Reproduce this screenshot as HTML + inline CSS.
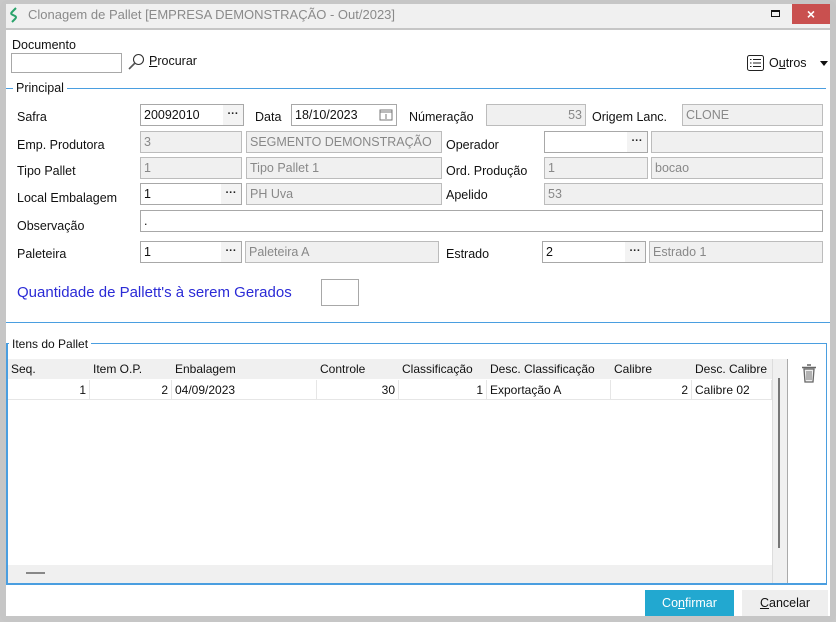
<!DOCTYPE html>
<html><head><meta charset="utf-8"><style>
*{box-sizing:border-box;margin:0;padding:0}
body{width:836px;height:622px;background:#c8c8c8;font-family:"Liberation Sans",sans-serif;font-size:12px;color:#111;position:relative;overflow:hidden}
.a{position:absolute}
.win{left:0;top:0;width:836px;height:622px;border-radius:8px;background:#c6c6c6}
.title{left:6px;top:4px;width:824px;height:24px;background:#f0f0f0}
.content{left:6px;top:30px;width:824px;height:586px;background:#fff}
.lbl{position:absolute;font-size:12.5px;color:#111;white-space:nowrap}
.in{position:absolute;height:22px;border:1px solid #a8a8a8;background:#fff;font-size:12.5px;padding:0 3px;line-height:20px;white-space:nowrap;overflow:hidden}
.g{background:#f0f0f0;color:#888;border-color:#bcbcbc}
.dots{position:absolute;right:0;top:0;width:20px;height:20px;background:#f3f3f3;text-align:center;font-weight:bold;font-size:11px;line-height:19px;color:#222}
.line{position:absolute;height:1px;background:#4a9ee0}
.th,.td{position:absolute;font-size:12px;white-space:nowrap;overflow:hidden;padding:0 3px;height:20px;line-height:20px}
.td{border-right:1px solid #e6e6e6;border-bottom:1px solid #e6e6e6}
</style></head><body>
<div class="a win"></div>
<div class="a title"></div>
<svg class="a" style="left:9px;top:7px" width="10" height="16" viewBox="0 0 10 16"><path d="M7 1 L3 5 Q1 7 4 8 L6 9 Q8 10 6 12 L3 15" stroke="#2aa36b" stroke-width="2" fill="none"/></svg>
<div class="a" style="left:28px;top:7px;font-size:13px;color:#8a8a8a">Clonagem de Pallet [EMPRESA DEMONSTRAÇÃO - Out/2023]</div>
<div class="a" style="left:771px;top:10px;width:9px;height:7px;border:1px solid #111;border-top-width:2px"></div>
<div class="a" style="left:792px;top:4px;width:38px;height:20px;background:#c9504f;color:#fff;text-align:center;font-size:14px;line-height:20px;font-weight:bold">×</div>
<div class="a content"></div>

<div class="lbl" style="left:12px;top:38px">Documento</div>
<div class="in" style="left:11px;top:53px;width:111px;height:20px"></div>
<svg class="a" style="left:127px;top:53px" width="18" height="18" viewBox="0 0 18 18"><circle cx="11.5" cy="6.5" r="5" stroke="#333" stroke-width="1.1" fill="none"/><path d="M8 10 L2 16" stroke="#555" stroke-width="1.6"/></svg>
<div class="lbl" style="left:149px;top:54px"><u>P</u>rocurar</div>
<svg class="a" style="left:746px;top:54px" width="19" height="18" viewBox="0 0 19 18"><rect x="1.5" y="1.5" width="16" height="15" rx="2" stroke="#222" fill="none"/><path d="M4 5.5h1.5M4 9h1.5M4 12.5h1.5M7 5.5h8M7 9h8M7 12.5h8" stroke="#222"/></svg>
<div class="lbl" style="left:769px;top:56px">O<u>u</u>tros</div>
<div class="a" style="left:820px;top:61px;border-left:4px solid transparent;border-right:4px solid transparent;border-top:5px solid #111"></div>

<div class="line" style="left:6px;top:88px;width:820px"></div>
<div class="lbl" style="left:13px;top:81px;background:#fff;padding:0 3px">Principal</div>

<div class="lbl" style="left:17px;top:110px">Safra</div>
<div class="in" style="left:140px;top:104px;width:104px">20092010<span class="dots">···</span></div>
<div class="lbl" style="left:255px;top:110px">Data</div>
<div class="in" style="left:291px;top:104px;width:106px">18/10/2023<svg style="position:absolute;right:3px;top:3px" width="14" height="13" viewBox="0 0 14 13"><rect x="1" y="2" width="12" height="10" stroke="#777" fill="none"/><path d="M1 4h12M7 6v5" stroke="#777"/></svg></div>
<div class="lbl" style="left:409px;top:110px">Númeração</div>
<div class="in g" style="left:486px;top:104px;width:100px;text-align:right">53</div>
<div class="lbl" style="left:592px;top:110px">Origem Lanc.</div>
<div class="in g" style="left:682px;top:104px;width:141px">CLONE</div>

<div class="lbl" style="left:17px;top:138px">Emp. Produtora</div>
<div class="in g" style="left:140px;top:131px;width:102px">3</div>
<div class="in g" style="left:246px;top:131px;width:196px">SEGMENTO DEMONSTRAÇÃO</div>
<div class="lbl" style="left:446px;top:138px">Operador</div>
<div class="in" style="left:544px;top:131px;width:104px"><span class="dots">···</span></div>
<div class="in g" style="left:651px;top:131px;width:172px"></div>

<div class="lbl" style="left:17px;top:164px">Tipo Pallet</div>
<div class="in g" style="left:140px;top:157px;width:102px">1</div>
<div class="in g" style="left:246px;top:157px;width:196px">Tipo Pallet 1</div>
<div class="lbl" style="left:446px;top:164px">Ord. Produção</div>
<div class="in g" style="left:544px;top:157px;width:104px">1</div>
<div class="in g" style="left:651px;top:157px;width:172px">bocao</div>

<div class="lbl" style="left:17px;top:191px">Local Embalagem</div>
<div class="in" style="left:140px;top:183px;width:102px">1<span class="dots">···</span></div>
<div class="in g" style="left:246px;top:183px;width:196px">PH Uva</div>
<div class="lbl" style="left:446px;top:188px">Apelido</div>
<div class="in g" style="left:544px;top:183px;width:279px">53</div>

<div class="lbl" style="left:17px;top:219px">Observação</div>
<div class="in" style="left:140px;top:210px;width:683px">.</div>

<div class="lbl" style="left:17px;top:247px">Paleteira</div>
<div class="in" style="left:140px;top:241px;width:102px">1<span class="dots">···</span></div>
<div class="in g" style="left:245px;top:241px;width:194px">Paleteira A</div>
<div class="lbl" style="left:446px;top:247px">Estrado</div>
<div class="in" style="left:542px;top:241px;width:104px">2<span class="dots">···</span></div>
<div class="in g" style="left:649px;top:241px;width:174px">Estrado 1</div>

<div class="lbl" style="left:17px;top:284px;font-size:15px;color:#2b2bd6">Quantidade de Pallett's à serem Gerados</div>
<div class="in" style="left:321px;top:279px;width:38px;height:27px"></div>

<div class="line" style="left:6px;top:322px;width:824px"></div>

<div class="a" style="left:6px;top:343px;width:821px;height:242px;border:1px solid #4a9ee0;border-left-width:2px;border-bottom-width:2px"></div>
<div class="lbl" style="left:9px;top:337px;background:#fff;padding:0 3px;font-size:12px">Itens do Pallet</div>
<div class="a" style="left:8px;top:359px;width:764px;height:20px;background:#f0f0f0"></div>
<div class="th" style="left:8px;top:359px">Seq.</div>
<div class="th" style="left:90px;top:359px">Item O.P.</div>
<div class="th" style="left:172px;top:359px">Enbalagem</div>
<div class="th" style="left:317px;top:359px">Controle</div>
<div class="th" style="left:399px;top:359px">Classificação</div>
<div class="th" style="left:487px;top:359px">Desc. Classificação</div>
<div class="th" style="left:611px;top:359px">Calibre</div>
<div class="th" style="left:692px;top:359px;width:80px">Desc. Calibre</div>
<div class="td" style="left:8px;top:380px;width:82px;text-align:right">1</div>
<div class="td" style="left:90px;top:380px;width:82px;text-align:right">2</div>
<div class="td" style="left:172px;top:380px;width:145px">04/09/2023</div>
<div class="td" style="left:317px;top:380px;width:82px;text-align:right">30</div>
<div class="td" style="left:399px;top:380px;width:88px;text-align:right">1</div>
<div class="td" style="left:487px;top:380px;width:124px">Exportação A</div>
<div class="td" style="left:611px;top:380px;width:81px;text-align:right">2</div>
<div class="td" style="left:692px;top:380px;width:80px">Calibre 02</div>
<div class="a" style="left:772px;top:359px;width:16px;height:224px;background:#f0f0f0;border-left:1px solid #ddd;border-right:1px solid #aaa"></div>
<div class="a" style="left:778px;top:378px;width:2px;height:170px;background:#777"></div>
<div class="a" style="left:8px;top:565px;width:764px;height:18px;background:#f0f0f0"></div>
<div class="a" style="left:26px;top:572px;width:19px;height:2px;background:#888"></div>
<svg class="a" style="left:801px;top:364px" width="16" height="20" viewBox="0 0 16 20"><path d="M6 1h4M1 3.5h14" stroke="#666" stroke-width="1.6"/><path d="M3 5h10l-1 13H4z" stroke="#666" stroke-width="1.3" fill="#eee"/><path d="M6 7v9M8 7v9M10 7v9" stroke="#777"/></svg>

<div class="a" style="left:645px;top:590px;width:89px;height:26px;background:#22a8d0;color:#fff;font-size:12.5px;text-align:center;line-height:26px">Co<u>n</u>firmar</div>
<div class="a" style="left:742px;top:590px;width:86px;height:26px;background:#eee;font-size:12.5px;text-align:center;line-height:26px"><u>C</u>ancelar</div>
</body></html>
